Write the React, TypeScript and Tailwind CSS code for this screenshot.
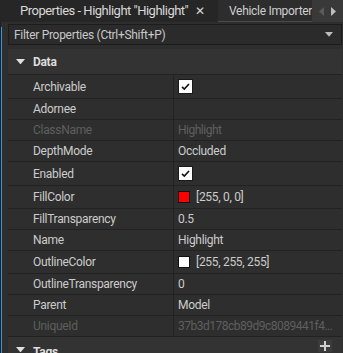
import React from "react";

const font = { fontFamily: '"Roboto", "Liberation Sans", sans-serif' };

type Row =
  | { name: string; kind: "check"; disabled?: boolean }
  | { name: string; kind: "text"; value: string; disabled?: boolean }
  | { name: string; kind: "color"; value: string; color: string };

const rows: Row[] = [
  { name: "Archivable", kind: "check" },
  { name: "Adornee", kind: "text", value: "" },
  { name: "ClassName", kind: "text", value: "Highlight", disabled: true },
  { name: "DepthMode", kind: "text", value: "Occluded" },
  { name: "Enabled", kind: "check" },
  { name: "FillColor", kind: "color", value: "[255, 0, 0]", color: "#ff0000" },
  { name: "FillTransparency", kind: "text", value: "0.5" },
  { name: "Name", kind: "text", value: "Highlight" },
  { name: "OutlineColor", kind: "color", value: "[255, 255, 255]", color: "#ffffff" },
  { name: "OutlineTransparency", kind: "text", value: "0" },
  { name: "Parent", kind: "text", value: "Model" },
  { name: "UniqueId", kind: "text", value: "37b3d178cb89d9c8089441f4...", disabled: true },
];

function Check() {
  return (
    <div className="w-[15px] h-[15px] bg-white border border-[#1a1a1a] flex items-center justify-center">
      <svg width="11" height="11" viewBox="0 0 11 11">
        <path d="M2 5.8 L4.3 8 L9 3" fill="none" stroke="#111" strokeWidth="1.6" />
      </svg>
    </div>
  );
}

function TriDown({ size = 9, color = "#d0d0d0" }: { size?: number; color?: string }) {
  return (
    <svg width={size} height={size * 0.6} viewBox="0 0 10 6">
      <path d="M0 0 L10 0 L5 6 Z" fill={color} />
    </svg>
  );
}

export default function App() {
  return (
    <div
      className="w-[343px] h-[353px] bg-[#2e2e2e] overflow-hidden flex flex-col text-[#cccccc] tracking-[-0.3px]"
      style={font}
    >
      {/* tab bar */}
      <div className="h-[22px] flex bg-[#262626] shrink-0">
        <div className="w-[218px] flex items-center pl-[20px] text-[13px] tracking-[-0.5px] text-[#d8d8d8] whitespace-nowrap">
          <span>Properties - Highlight "Highlight"</span>
          <span className="ml-[7px] text-[#d8d8d8] text-[12px]">✕</span>
        </div>
        <div className="w-[94px] bg-[#2d2d2d] border-b border-[#4a4a4a] flex items-center pl-[11px] text-[12px] text-[#cfcfcf] whitespace-nowrap overflow-hidden">
          Vehicle Importer
        </div>
        <div className="flex-1 bg-[#393939] flex items-center justify-around px-[3px]">
          <svg width="5" height="9" viewBox="0 0 5 9"><path d="M5 0 L0 4.5 L5 9 Z" fill="#5a5a5a" /></svg>
          <svg width="5" height="9" viewBox="0 0 5 9"><path d="M0 0 L5 4.5 L0 9 Z" fill="#bdbdbd" /></svg>
        </div>
      </div>
      <div className="flex flex-1 min-h-0">
        {/* left gutter */}
        <div className="w-[8px] shrink-0 flex">
          <div className="w-[1px] bg-[#1e1e1e]" />
          <div className="w-[1px] mt-[5px] bg-[#3a96dd]" />
        </div>
        <div className="flex-1 flex flex-col min-w-0 mr-[1px]">
          {/* filter */}
          <div className="mt-[2px] h-[21px] border border-[#1c1c1c] bg-[#2b2b2b] flex items-center pl-[5px] pr-[8px] shrink-0">
            <span className="text-[12px] text-[#c8c8c8] flex-1">Filter Properties (Ctrl+Shift+P)</span>
            <TriDown size={8} color="#bcbcbc" />
          </div>
          {/* Data header */}
          <div className="mt-[4px] h-[26px] bg-[#333333] border-b border-[#222222] flex items-center pl-[8px] shrink-0">
            <TriDown size={9} color="#e0e0e0" />
            <span className="ml-[8px] text-[12px] font-bold text-[#dddddd]">Data</span>
          </div>
          {rows.map((r) => {
            const h = r.kind === "check" ? "h-[24px]" : r.kind === "color" ? "h-[23px]" : "h-[21px]";
            const dis = "disabled" in r && r.disabled;
            return (
              <div key={r.name} className={`${h} flex border-b border-[#222222] shrink-0`}>
                <div
                  className={`w-[166px] border-r border-[#222222] flex items-center pl-[25px] text-[12px] ${
                    dis ? "text-[#5f5f5f]" : "text-[#cccccc]"
                  }`}
                >
                  {r.name}
                </div>
                <div
                  className={`flex-1 flex items-center pl-[4px] text-[12px] overflow-hidden ${
                    dis ? "text-[#5f5f5f] tracking-[-0.5px]" : "text-[#cccccc]"
                  }`}
                >
                  {r.kind === "check" && <Check />}
                  {r.kind === "text" && <span className="whitespace-nowrap">{r.value}</span>}
                  {r.kind === "color" && (
                    <>
                      <div className="w-[12px] h-[12px] border border-[#111]" style={{ background: r.color }} />
                      <span className="ml-[6px]">{r.value}</span>
                    </>
                  )}
                </div>
              </div>
            );
          })}
          {/* Tags header */}
          <div className="h-[26px] bg-[#333333] flex items-start pt-[8px] pl-[8px] shrink-0 relative">
            <div className="mt-[2px]"><TriDown size={9} color="#e0e0e0" /></div>
            <span className="ml-[8px] text-[12px] leading-[14px] font-bold text-[#dddddd]">Tags</span>
            <div className="absolute right-[10px] top-[3px] w-[14px] h-[12px] bg-[#3c3c3c] flex items-center justify-center">
              <svg width="10" height="10" viewBox="0 0 10 10">
                <path d="M5 0 V10 M0 5 H10" stroke="#d0d0d0" strokeWidth="2" />
              </svg>
            </div>
          </div>
        </div>
      </div>
    </div>
  );
}
